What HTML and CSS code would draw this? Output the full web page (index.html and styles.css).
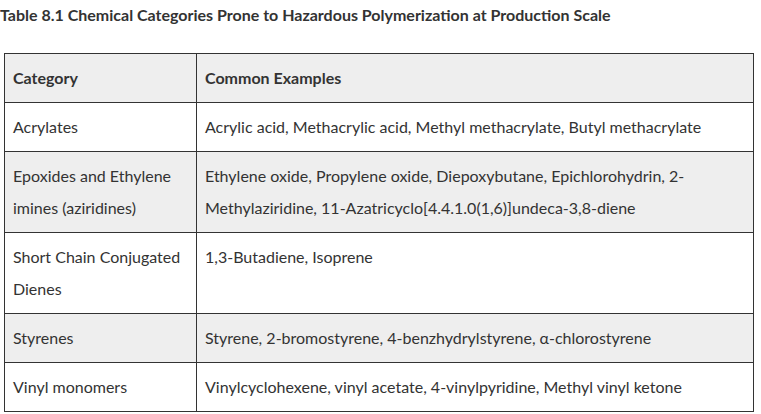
FILE: index.html
```html
<!DOCTYPE html>
<html>
<head>
<meta charset="utf-8">
<link rel="stylesheet" href="styles.css">
</head>
<body>
<div class="wrap">
  <p class="title">Table 8.1 Chemical Categories Prone to Hazardous Polymerization at Production Scale</p>
  <table class="data">
    <thead>
      <tr class="shade"><th class="c1">Category</th><th>Common Examples</th></tr>
    </thead>
    <tbody>
      <tr><td>Acrylates</td><td>Acrylic acid, Methacrylic acid, Methyl methacrylate, Butyl methacrylate</td></tr>
      <tr class="shade"><td>Epoxides and Ethylene imines (aziridines)</td><td>Ethylene oxide, Propylene oxide, Diepoxybutane, Epichlorohydrin, 2-Methylaziridine, 11-Azatricyclo[4.4.1.0(1,6)]undeca-3,8-diene</td></tr>
      <tr><td>Short Chain Conjugated Dienes</td><td>1,3-Butadiene, Isoprene</td></tr>
      <tr class="shade"><td>Styrenes</td><td>Styrene, 2-bromostyrene, 4-benzhydrylstyrene, α-chlorostyrene</td></tr>
      <tr><td>Vinyl monomers</td><td>Vinylcyclohexene, vinyl acetate, 4-vinylpyridine, Methyl vinyl ketone</td></tr>
    </tbody>
  </table>
</div>
</body>
</html>
```
FILE: styles.css
```css
html, body {
  margin: 0;
  padding: 0;
  background: #fff;
}
body {
  font-family: Lato, "Liberation Sans", sans-serif;
  font-size: 16px;
  color: #333;
}
.wrap {
  padding: 0;
}
.title {
  margin: 0;
  padding: 5px 0 0 0;
  font-weight: 700;
  line-height: 20px;
}
.data {
  margin: 28px 0 0 4px;
  width: 750px;
  border-collapse: collapse;
  table-layout: fixed;
}
.data th, .data td {
  border: 1px solid #333;
  padding: 8px 8px;
  line-height: 32px;
  text-align: left;
  vertical-align: top;
}
.data th {
  font-weight: 700;
}
.data .c1 {
  width: 175px;
}
.shade {
  background: #eee;
}
```
